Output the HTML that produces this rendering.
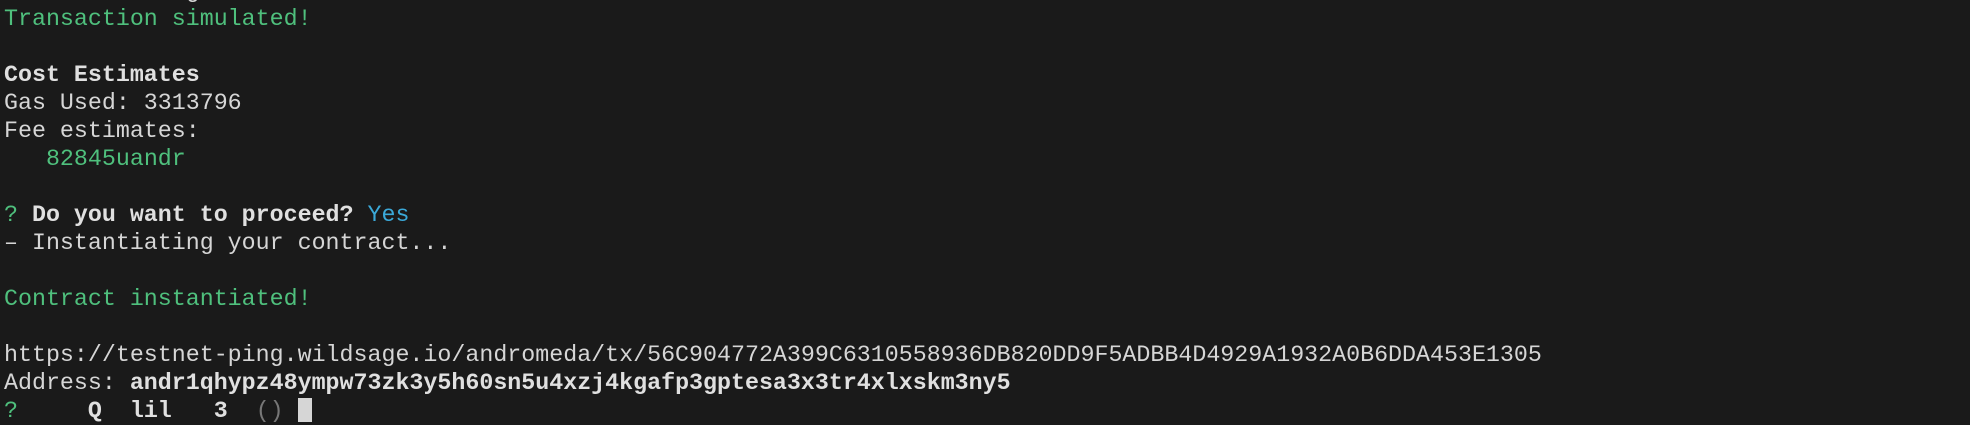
<!DOCTYPE html>
<html><head><meta charset="utf-8"><style>
html,body{margin:0;padding:0;width:1970px;height:404px;overflow:hidden;background:#1a1a1a;}
pre{position:absolute;left:4px;top:-23px;margin:0;font-family:"Liberation Mono","DejaVu Sans Mono",monospace;font-size:23.3px;line-height:28px;color:#d6d6d6;}
.g{color:#4fc07d}.b{font-weight:bold;color:#e0e0e0}.c{color:#3ba9d9}.dim{color:#777}
.cur{display:inline-block;width:14px;height:24px;background:#d6d6d6;vertical-align:-5px}
</style></head><body>
<pre>  - Simulating...
<span class="g">Transaction simulated!</span>

<span class="b">Cost Estimates</span>
Gas Used: 3313796
Fee estimates:
   <span class="g">82845uandr</span>

<span class="g">?</span> <span class="b">Do you want to proceed?</span> <span class="c">Yes</span>
– Instantiating your contract...

<span class="g">Contract instantiated!</span>

https://testnet-ping.wildsage.io/andromeda/tx/56C904772A399C6310558936DB820DD9F5ADBB4D4929A1932A0B6DDA453E1305
Address: <span class="b">andr1qhypz48ympw73zk3y5h60sn5u4xzj4kgafp3gptesa3x3tr4xlxskm3ny5</span>
<span class="g">?</span>     <span class="b">Q</span>  <span class="b">lil</span>   <span class="b">3</span>  <span class="dim">()</span> <span class="cur"></span></pre>
</body></html>
